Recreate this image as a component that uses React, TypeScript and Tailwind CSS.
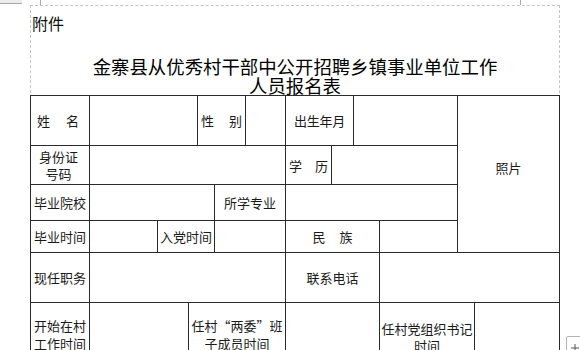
import React from "react";

const cell =
  "border-r border-b border-[#2a2a2a] flex items-center justify-center text-center text-[13px] leading-[17px] text-[#1a1a1a] shrink-0";

export default function App() {
  return (
    <div className="relative w-[580px] h-[350px] overflow-hidden bg-white font-['Noto_Sans_CJK_SC',sans-serif]">
      {/* corner marks */}
      <div className="absolute left-0 top-0 w-[22px] h-[4px] bg-[#ececec] border-b border-[#a8a8a8]" />
      <div className="absolute left-[40px] top-0 w-px h-[5px] bg-[#a8a8a8]" />
      <div className="absolute left-[520px] top-0 w-px h-[5px] bg-[#a8a8a8]" />

      <div className="pt-[5px] pl-[30px]">
        <div className="w-[530px] border-t border-x border-dashed border-[#c4c4c4]">
          <div className="pt-[7px] pl-[1px] text-[16px] leading-[20px] text-[#111]">附件</div>
          <div className="mt-[24px] text-center text-[18.4px] leading-[19px] text-[#000]">
            金寨县从优秀村干部中公开招聘乡镇事业单位工作
            <br />
            人员报名表
          </div>

          <div className="w-[530px] -mx-px border-l border-t border-[#2a2a2a]">
            <div className="flex">
              <div className="w-[427px] flex flex-col">
                {/* row 1 */}
                <div className="flex h-[50px]">
                  <div className={`${cell} w-[59px] gap-[16px] pr-[4px]`}>
                    <span>姓</span>
                    <span>名</span>
                  </div>
                  <div className={`${cell} w-[108px]`} />
                  <div className={`${cell} w-[48px] gap-[15px]`}>
                    <span>性</span>
                    <span>别</span>
                  </div>
                  <div className={`${cell} w-[40px]`} />
                  <div className={`${cell} w-[68px] tracking-[-0.3px]`}>出生年月</div>
                  <div className={`${cell} w-[104px]`} />
                </div>
                {/* row 2 */}
                <div className="flex h-[39px]">
                  <div className={`${cell} w-[59px] pr-[3px]`}>
                    身份证
                    <br />
                    号码
                  </div>
                  <div className={`${cell} w-[196px]`} />
                  <div className={`${cell} w-[46px] gap-[13px]`}>
                    <span>学</span>
                    <span>历</span>
                  </div>
                  <div className={`${cell} w-[126px]`} />
                </div>
                {/* row 3 */}
                <div className="flex h-[36px]">
                  <div className={`${cell} w-[59px] whitespace-nowrap`}>毕业院校</div>
                  <div className={`${cell} w-[125px]`} />
                  <div className={`${cell} w-[71px] whitespace-nowrap`}>所学专业</div>
                  <div className={`${cell} w-[172px]`} />
                </div>
                {/* row 4 */}
                <div className="flex h-[32px]">
                  <div className={`${cell} w-[59px] whitespace-nowrap`}>毕业时间</div>
                  <div className={`${cell} w-[68px]`} />
                  <div className={`${cell} w-[57px] whitespace-nowrap`}>入党时间</div>
                  <div className={`${cell} w-[71px]`} />
                  <div className={`${cell} w-[94px] gap-[14px]`}>
                    <span>民</span>
                    <span>族</span>
                  </div>
                  <div className={`${cell} w-[78px]`} />
                </div>
              </div>
              <div className={`${cell} w-[102px] pb-[14px] text-[12.5px]`}>照片</div>
            </div>
            {/* row 5 */}
            <div className="flex h-[50px]">
              <div className={`${cell} w-[59px] whitespace-nowrap`}>现任职务</div>
              <div className={`${cell} w-[196px]`} />
              <div className={`${cell} w-[94px] whitespace-nowrap`}>联系电话</div>
              <div className={`${cell} w-[180px]`} />
            </div>
            {/* row 6 */}
            <div className="flex h-[66px]">
              <div className={`${cell} w-[59px] leading-[18px] pb-[2px]`}>
                开始在村
                <br />
                工作时间
              </div>
              <div className={`${cell} w-[99px]`} />
              <div className={`${cell} w-[97px] leading-[18px] pb-[2px] whitespace-nowrap`}>
                任村“两委”班
                <br />
                子成员时间
              </div>
              <div className={`${cell} w-[94px]`} />
              <div className={`${cell} w-[95px] leading-[15px] pt-[2px] whitespace-nowrap`}>
                任村党组织书记
                <br />
                时间
              </div>
              <div className={`${cell} w-[85px]`} />
            </div>
          </div>
        </div>
      </div>

      {/* add-row button */}
      <div className="absolute left-[566px] top-[336px] w-[20px] h-[20px] border border-[#b4b4b4] rounded-[2px] bg-white">
        <svg className="absolute left-[4px] top-[7px]" width="8" height="8" viewBox="0 0 8 8">
          <path d="M4 0V8M0 4H8" stroke="#555" strokeWidth="1" fill="none" />
        </svg>
      </div>
    </div>
  );
}
